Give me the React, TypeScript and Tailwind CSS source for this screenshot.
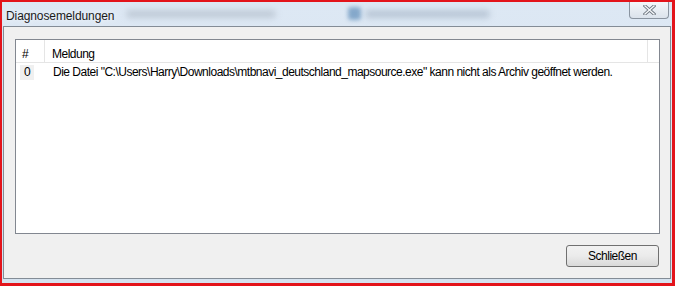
import React from 'react';

const rows = [
  {
    id: 0,
    text: 'Die Datei "C:\\Users\\Harry\\Downloads\\mtbnavi_deutschland_mapsource.exe" kann nicht als Archiv geöffnet werden.',
  },
];

export default function App() {
  return (
    <div
      className="w-[675px] h-[286px] bg-[#e3141b] pt-[2px] pl-[2px] pr-[3px] pb-[3px] flex flex-col text-[12px] tracking-[-0.5px] text-black"
      style={{ fontFamily: '"Liberation Sans", Arial, sans-serif' }}
    >
      {/* Window frame (aero glass) */}
      <div className="flex-1 flex flex-col bg-gradient-to-b from-[#dde8f4] to-[#d5e2ef] px-[1px] pb-[4px]">
        {/* Title bar */}
        <div className="h-[24px] flex items-start">
          <div className="pt-[5px] pl-[3px] text-[12px] tracking-[-0.1px] text-[#1a1a1a] [text-shadow:0_0_6px_#ffffff]">
            Diagnosemeldungen
          </div>
          <div className="ml-[12px] mt-[8px] h-[8px] w-[150px] rounded-full bg-[#a3aebb] opacity-50 blur-[3px]" />
          <div className="ml-[72px] mt-[5px] h-[13px] w-[13px] rounded-[3px] bg-[#4b7fb0] opacity-60 blur-[2px]" />
          <div className="ml-[4px] mt-[8px] h-[8px] w-[125px] rounded-full bg-[#95a5b8] opacity-50 blur-[3px]" />
          <div className="flex-1" />
          {/* Close button */}
          <div className="mr-[2px] w-[40px] h-[17px] rounded-b-[4px] border border-t-0 border-[#8a94a0] bg-gradient-to-b from-[#f4f7fa] to-[#dbe3ec] flex items-center justify-center">
            <svg width="13" height="10" viewBox="0 0 13 10">
              <path d="M2 1 L11 9 M11 1 L2 9" stroke="#6d7680" strokeWidth="3.2" strokeLinecap="square" fill="none" />
              <path d="M2 1 L11 9 M11 1 L2 9" stroke="#f6f8fa" strokeWidth="1.4" strokeLinecap="square" fill="none" />
            </svg>
          </div>
        </div>

        {/* Client area */}
        <div className="flex-1 flex flex-col border border-[#838c96] bg-[#f0f0f0] pt-[12px] pl-[11px] pr-[10px]">
          {/* List view */}
          <div className="h-[195px] border border-[#828790] bg-white flex flex-col overflow-hidden">
            <div className="h-[23px] shrink-0 flex border-b border-[#e5e5e5]">
              <div className="w-[29px] shrink-0 border-r border-[#e5e5e5] pl-[6px] pt-[5px]">#</div>
              <div className="flex-1 border-r border-[#e5e5e5] pl-[7px] pt-[5px]">Meldung</div>
              <div className="w-[11px] shrink-0" />
            </div>
            {rows.map((r) => (
              <div key={r.id} className="h-[17px] shrink-0 flex items-center">
                <div className="w-[29px] shrink-0 pl-[4px]">
                  <span className="inline-block bg-[#f0f0f0] px-[4px] leading-[15px]">{r.id}</span>
                </div>
                <div className="pl-[8px] whitespace-nowrap">{r.text}</div>
              </div>
            ))}
          </div>

          {/* Footer */}
          <div className="flex justify-end pt-[11px] pr-[1px]">
            <button className="w-[93px] h-[22px] rounded-[3px] border border-[#707070] bg-gradient-to-b from-[#f2f2f2] via-[#ebebeb] to-[#d9d9d9] text-[12px] leading-none">
              Schließen
            </button>
          </div>
        </div>
      </div>
    </div>
  );
}
